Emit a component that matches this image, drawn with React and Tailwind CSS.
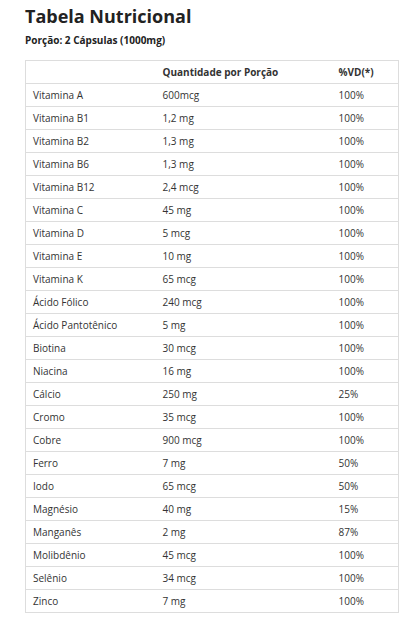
const rows = [
  ["Vitamina A", "600mcg", "100%"],
  ["Vitamina B1", "1,2 mg", "100%"],
  ["Vitamina B2", "1,3 mg", "100%"],
  ["Vitamina B6", "1,3 mg", "100%"],
  ["Vitamina B12", "2,4 mcg", "100%"],
  ["Vitamina C", "45 mg", "100%"],
  ["Vitamina D", "5 mcg", "100%"],
  ["Vitamina E", "10 mg", "100%"],
  ["Vitamina K", "65 mcg", "100%"],
  ["Ácido Fólico", "240 mcg", "100%"],
  ["Ácido Pantotênico", "5 mg", "100%"],
  ["Biotina", "30 mcg", "100%"],
  ["Niacina", "16 mg", "100%"],
  ["Cálcio", "250 mg", "25%"],
  ["Cromo", "35 mcg", "100%"],
  ["Cobre", "900 mcg", "100%"],
  ["Ferro", "7 mg", "50%"],
  ["Iodo", "65 mcg", "50%"],
  ["Magnésio", "40 mg", "15%"],
  ["Manganês", "2 mg", "87%"],
  ["Molibdênio", "45 mcg", "100%"],
  ["Selênio", "34 mcg", "100%"],
  ["Zinco", "7 mg", "100%"],
]

export default function App() {
  return (
    <div className="min-h-screen bg-white px-[25px] pt-[4px] text-[#333]" style={{ fontFamily: '"Open Sans", sans-serif' }}>
      <h1 className="text-[18px] font-bold leading-[24px] text-[#222]">Tabela Nutricional</h1>
      <p className="mt-[5px] text-[10px] font-bold leading-[14px] text-[#222]">Porção: 2 Cápsulas (1000mg)</p>
      <table className="mt-[13px] w-[373px] border-collapse border border-[#ddd] text-[10px] table-fixed">
        <colgroup>
          <col className="w-[130px]" />
          <col className="w-[176px]" />
          <col className="w-[67px]" />
        </colgroup>
        <thead>
          <tr className="h-[23px]">
            <th className="border-b border-[#ddd] px-[7px]"></th>
            <th className="border-b border-[#ddd] px-[7px] text-left font-bold text-[#333]">Quantidade por Porção</th>
            <th className="border-b border-[#ddd] px-[7px] text-left font-bold text-[#333]">%VD(*)</th>
          </tr>
        </thead>
        <tbody>
          {rows.map((r) => (
            <tr key={r[0]} className="h-[23px]">
              <td className="border-b border-[#ddd] px-[7px]">{r[0]}</td>
              <td className="border-b border-[#ddd] px-[7px]">{r[1]}</td>
              <td className="border-b border-[#ddd] px-[7px]">{r[2]}</td>
            </tr>
          ))}
        </tbody>
      </table>
    </div>
  )
}
